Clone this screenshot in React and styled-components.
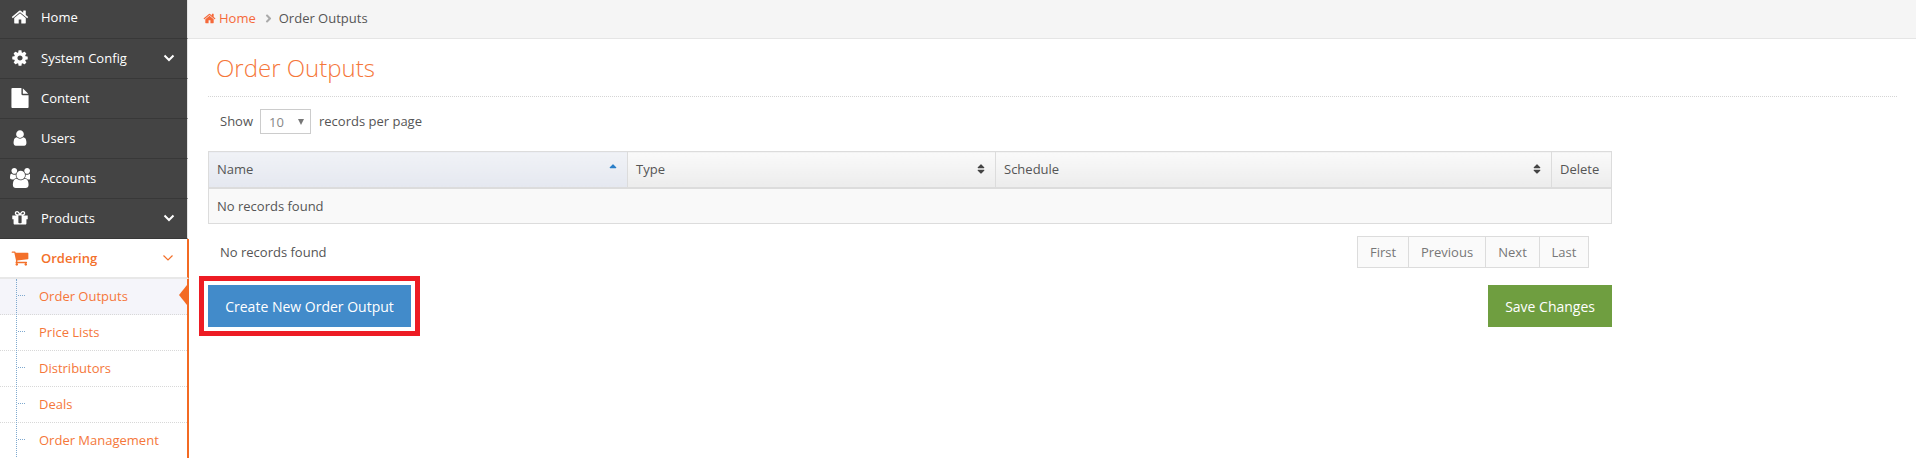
import React from 'react'
import styled, { createGlobalStyle } from 'styled-components'
import { FaSort, FaSortUp, FaAngleRight } from 'react-icons/fa'

const GlobalStyle = createGlobalStyle`
  html, body {
    margin: 0;
    padding: 0;
    background: #fff;
    font-family: "Open Sans", "Liberation Sans", sans-serif;
    overflow: hidden;
  }
  * { box-sizing: border-box; }
`

const iconPaths = {
  home: 'M1472 992v480q0 26-19 45t-45 19h-384v-384h-256v384h-384q-26 0-45-19t-19-45v-480q0-1 .5-3t.5-3l575-474 575 474q1 2 1 6zm223-69l-62 74q-8 9-21 11h-3q-13 0-21-7l-692-577-692 577q-12 8-24 7-13-2-21-11l-62-74q-8-10-7-23.500t11-21.500l719-599q32-26 76-26t76 26l244 204v-195q0-14 9-23t23-9h192q14 0 23 9t9 23v408l219 182q10 8 11 21.500t-7 23.500z',
  cog: 'M1152 896q0-106-75-181t-181-75-181 75-75 181 75 181 181 75 181-75 75-181zm512-109v222q0 12-8 23t-20 13l-185 28q-19 54-39 91 35 50 107 138 10 12 10 25t-9 23q-27 37-99 108t-94 71q-12 0-26-9l-138-108q-44 23-91 38-16 136-29 186-7 28-36 28h-222q-14 0-24.500-8.500t-11.500-21.500l-28-184q-49-16-90-37l-141 107q-10 9-25 9-14 0-25-11-126-114-165-168-7-10-7-23 0-12 8-23 15-21 51-66.500t54-70.500q-27-50-41-99l-183-27q-13-2-21-12.500t-8-23.500v-222q0-12 8-23t19-13l186-28q14-46 39-92-40-57-107-138-10-12-10-24 0-10 9-23 26-36 98.500-107.500t94.500-71.500q13 0 26 10l138 107q44-23 91-38 16-136 29-186 7-28 36-28h222q14 0 24.500 8.500t11.500 21.500l28 184q49 16 90 37l142-107q9-9 24-9 13 0 25 10 129 119 165 170 7 8 7 22 0 12-8 23-15 21-51 66.500t-54 70.500q26 50 41 98l183 28q13 2 21 12.500t8 23.500z',
  file: 'M1152 512v-472q22 14 36 28l408 408q14 14 28 36h-472zm-128 32q0 40 28 68t68 28h544v1056q0 40-28 68t-68 28h-1344q-40 0-68-28t-28-68v-1600q0-40 28-68t68-28h800v544z',
  user: 'M1536 1399q0 109-62.500 187t-150.500 78h-854q-88 0-150.500-78t-62.500-187q0-85 8.500-160.500t31.500-152 58.500-131 94-89 134.500-34.500q131 128 313 128t313-128q76 0 134.500 34.500t94 89 58.500 131 31.500 152 8.500 160.500zm-256-887q0 159-112.500 271.500t-271.500 112.500-271.500-112.500-112.500-271.500 112.500-271.500 271.500-112.500 271.500 112.500 112.500 271.500z',
  users: 'M593 896q-162 5-265 128h-134q-82 0-138-40.500t-56-118.500q0-353 124-353 6 0 43.500 21t97.500 42.500 119 21.500q67 0 133-23-5 37-5 66 0 139 81 256zm1071 637q0 120-73 189.500t-194 69.500h-874q-121 0-194-69.500t-73-189.500q0-53 3.500-103.500t14-109 26.500-108.500 43-97.500 62-81 85.500-53.500 111.500-20q10 0 43 21.500t73 48 107 48 135 21.500 135-21.500 107-48 73-48 43-21.500q61 0 111.500 20t85.500 53.500 62 81 43 97.500 26.500 108.500 14 109 3.500 103.500zm-1024-1277q0 106-75 181t-181 75-181-75-75-181 75-181 181-75 181 75 75 181zm704 384q0 159-112.500 271.500t-271.500 112.500-271.500-112.500-112.500-271.500 112.500-271.500 271.500-112.500 271.500 112.500 112.500 271.500zm576 225q0 78-56 118.500t-138 40.500h-134q-103-123-265-128 81-117 81-256 0-29-5-66 66 23 133 23 59 0 119-21.500t97.500-42.500 43.500-21q124 0 124 353zm-128-609q0 106-75 181t-181 75-181-75-75-181 75-181 181-75 181 75 75 181z',
  gift: 'M1056 1356v-716h-320v716q0 25 18 38.500t46 13.500h192q28 0 46-13.500t18-38.500zm-456-844h195l-126-161q-26-31-69-31-40 0-68 28t-28 68 28 68 68 28zm688-96q0-40-28-68t-68-28q-43 0-69 31l-125 161h194q40 0 68-28t28-68zm376 256v320q0 14-9 23t-23 9h-96v416q0 40-28 68t-68 28h-1088q-40 0-68-28t-28-68v-416h-96q-14 0-23-9t-9-23v-320q0-14 9-23t23-9h440q-93 0-158.500-65.500t-65.500-158.500 65.500-158.500 158.500-65.500q107 0 168 77l128 165 128-165q61-77 168-77 93 0 158.500 65.500t65.500 158.500-65.500 158.500-158.500 65.500h440q14 0 23 9t9 23z',
  cart: 'M704 1536q0 52-38 90t-90 38-90-38-38-90 38-90 90-38 90 38 38 90zm896 0q0 52-38 90t-90 38-90-38-38-90 38-90 90-38 90 38 38 90zm128-1088v512q0 24-16.500 42.500t-40.500 21.500l-1044 122q13 60 13 70 0 16-24 64h920q26 0 45 19t19 45-19 45-45 19h-1024q-26 0-45-19t-19-45q0-11 8-31.500t16-36 21.500-40 15.500-29.500l-177-823h-204q-26 0-45-19t-19-45 19-45 45-19h256q16 0 28.500 6.500t19.500 15.500 13 24.500 8 26 5.500 29.500 4.500 26h1201q26 0 45 19t19 45z',
}

function Glyph({ name, size }) {
  return (
    <svg width={size} height={size} viewBox="0 0 1792 1792" fill="currentColor">
      <path d={iconPaths[name]} />
    </svg>
  )
}

function Chevron({ weight = 2 }) {
  return (
    <svg width="12" height="8" viewBox="0 0 12 8" fill="none" stroke="currentColor" strokeWidth={weight}>
      <polyline points="1.5,1.5 6,6 10.5,1.5" />
    </svg>
  )
}

const Page = styled.div`
  display: flex;
  width: 1916px;
  height: 458px;
  overflow: hidden;
`

const Sidebar = styled.nav`
  width: 188px;
  flex: none;
  display: flex;
  flex-direction: column;
`

const NavItem = styled.div`
  height: 40px;
  flex: none;
  display: flex;
  align-items: center;
  background: #444444;
  border-bottom: 1px solid #383838;
  border-right: 1px solid #e4e4e4;
  color: #fff;
  font-size: 13px;
  padding: 0 12px 2px 10px;
  &:first-child { height: 39px; padding-bottom: 4px; }
`

const ActiveItem = styled(NavItem)`
  background: #fff;
  color: #f3702a;
  font-weight: 600;
  border-bottom: 2px solid #e8e8e8;
  border-right: 2px solid #f36a23;
  margin-right: -1px;
  padding-right: 13px;
  padding-bottom: 1px;
`

const NavIcon = styled.span`
  width: 20px;
  margin-right: 11px;
  display: flex;
  justify-content: center;
`

const NavLabel = styled.span`
  flex: 1;
`

const SubMenu = styled.div`
  flex: 1;
  display: flex;
  flex-direction: column;
  border-right: 2px solid #f36a23;
  margin-right: -1px;
  position: relative;
  &::before {
    content: '';
    position: absolute;
    z-index: 1;
    left: 16px;
    top: 0;
    bottom: 0;
    border-left: 1px dotted #7fa9cf;
  }
`

const SubItem = styled.div`
  height: 36px;
  flex: none;
  display: flex;
  align-items: center;
  position: relative;
  padding: 0 0 1px 39px;
  font-size: 13px;
  color: #f5773a;
  background: ${p => (p.$active ? '#f5f5fa' : '#fff')};
  border-bottom: 1px dotted #d8d8d8;
  &::before {
    content: '';
    position: absolute;
    left: 18px;
    top: 16px;
    width: 7px;
    border-top: 1px dotted #7fa9cf;
  }
  ${p => p.$active && `
    &::after {
      content: '';
      position: absolute;
      right: 0;
      top: 6px;
      border-style: solid;
      border-width: 10px 8px 10px 0;
      border-color: transparent #f36a23 transparent transparent;
    }
  `}
`

const Main = styled.main`
  flex: 1;
  min-width: 0;
`

const Breadcrumb = styled.div`
  height: 39px;
  display: flex;
  align-items: center;
  background: #f5f5f5;
  border-bottom: 1px solid #e5e5e5;
  padding: 0 0 2px 15px;
  font-size: 13px;
  color: #555;
`

const CrumbLink = styled.span`
  display: flex;
  align-items: center;
  gap: 3px;
  color: #f5693a;
`

const CrumbSep = styled.span`
  display: flex;
  margin: 0 4px 0 6px;
  color: #aaa;
  font-size: 13px;
`

const Content = styled.div`
  padding: 0 304px 0 20px;
`

const Title = styled.h1`
  margin: 0 -285px 0 0;
  padding: 12px 0 0 8px;
  height: 58px;
  border-bottom: 1px dotted #d5d5d5;
  font-size: 24px;
  line-height: 33px;
  font-weight: 300;
  color: #f5773a;
`

const LengthRow = styled.div`
  display: flex;
  align-items: center;
  height: 26px;
  margin-top: 12px;
  padding: 0 0 2px 12px;
  font-size: 13px;
  color: #555;
`

const FakeSelect = styled.div`
  width: 51px;
  height: 25px;
  margin: 0 8px -1px 7px;
  display: flex;
  align-items: center;
  justify-content: space-between;
  padding: 0 6px 0 8px;
  border: 1px solid #ccc;
  color: #888;
  font-size: 13px;
`

const SelectArrow = styled.span`
  width: 0;
  height: 0;
  border-style: solid;
  border-width: 6px 3.5px 0;
  border-color: #777 transparent transparent;
`

const Table = styled.table`
  width: 1403px;
  margin-top: 16px;
  border-collapse: collapse;
  table-layout: fixed;
  font-size: 13px;
  color: #555;
`

const Th = styled.th`
  height: 36px;
  padding: 0 8px;
  text-align: left;
  font-weight: 500;
  color: #555;
  border: 1px solid #dcdcdc;
  border-bottom-width: 2px;
  background: ${p => (p.$sorted
    ? 'linear-gradient(#f0f2f6, #e5e8f0)'
    : 'linear-gradient(#fafafa, #ececec)')};
`

const ThInner = styled.div`
  display: flex;
  align-items: center;
  justify-content: space-between;
  svg { font-size: 12px; color: ${p => (p.$sorted ? '#2a7ec8' : '#444')}; }
`

const Td = styled.td`
  height: 36px;
  padding: 0 8px;
  background: #f9f9f9;
  border: 1px solid #dcdcdc;
`

const PagerRow = styled.div`
  display: flex;
  align-items: center;
  justify-content: space-between;
  height: 32px;
  margin-top: 12px;
  padding: 0 23px 0 12px;
  font-size: 13px;
  color: #555;
`

const Pager = styled.div`
  display: flex;
`

const PageBtn = styled.div`
  width: ${p => p.$w}px;
  height: 32px;
  display: flex;
  align-items: center;
  justify-content: center;
  background: #fafafa;
  border: 1px solid #dcdcdc;
  margin-left: -1px;
  color: #777;
  font-size: 13px;
`

const ActionRow = styled.div`
  display: flex;
  justify-content: space-between;
  width: 1404px;
  margin-top: 17px;
`

const Button = styled.button`
  height: 42px;
  border: 0;
  padding: 0 17px;
  color: #fff;
  font-family: inherit;
  font-size: 14px;
  background: ${p => p.$bg};
`

const CreateButton = styled(Button)`
  width: 203px;
  box-shadow: 0 0 0 4px #fff, 0 0 0 9px #ed1c24;
`

const navItems = [
  { label: 'Home', icon: 'home', size: 18 },
  { label: 'System Config', icon: 'cog', size: 18, arrow: true },
  { label: 'Content', icon: 'file', size: 20 },
  { label: 'Users', icon: 'user', size: 18 },
  { label: 'Accounts', icon: 'users', size: 20 },
  { label: 'Products', icon: 'gift', size: 18, arrow: true },
]

const subItems = ['Order Outputs', 'Price Lists', 'Distributors', 'Deals', 'Order Management']

const pages = [['First', 52], ['Previous', 78], ['Next', 55], ['Last', 50]]

export default function App() {
  return (
    <Page>
      <GlobalStyle />
      <Sidebar>
        {navItems.map(item => (
          <NavItem key={item.label}>
            <NavIcon><Glyph name={item.icon} size={item.size} /></NavIcon>
            <NavLabel>{item.label}</NavLabel>
            {item.arrow && <Chevron />}
          </NavItem>
        ))}
        <ActiveItem>
          <NavIcon><Glyph name="cart" size={18} /></NavIcon>
          <NavLabel>Ordering</NavLabel>
          <Chevron weight={1.2} />
        </ActiveItem>
        <SubMenu>
          {subItems.map((s, i) => (
            <SubItem key={s} $active={i === 0}>{s}</SubItem>
          ))}
        </SubMenu>
      </Sidebar>
      <Main>
        <Breadcrumb>
          <CrumbLink><Glyph name="home" size={13} />Home</CrumbLink>
          <CrumbSep><FaAngleRight /></CrumbSep>
          Order Outputs
        </Breadcrumb>
        <Content>
          <Title>Order Outputs</Title>
          <LengthRow>
            Show
            <FakeSelect>10<SelectArrow /></FakeSelect>
            records per page
          </LengthRow>
          <Table>
            <colgroup>
              <col style={{ width: 419 }} />
              <col style={{ width: 368 }} />
              <col style={{ width: 556 }} />
              <col style={{ width: 60 }} />
            </colgroup>
            <thead>
              <tr>
                <Th $sorted><ThInner $sorted>Name<FaSortUp /></ThInner></Th>
                <Th><ThInner>Type<FaSort /></ThInner></Th>
                <Th><ThInner>Schedule<FaSort /></ThInner></Th>
                <Th>Delete</Th>
              </tr>
            </thead>
            <tbody>
              <tr><Td colSpan={4}>No records found</Td></tr>
            </tbody>
          </Table>
          <PagerRow>
            No records found
            <Pager>
              {pages.map(([p, w]) => <PageBtn key={p} $w={w}>{p}</PageBtn>)}
            </Pager>
          </PagerRow>
          <ActionRow>
            <CreateButton $bg="#428bca">Create New Order Output</CreateButton>
            <Button $bg="#6f9e40">Save Changes</Button>
          </ActionRow>
        </Content>
      </Main>
    </Page>
  )
}
